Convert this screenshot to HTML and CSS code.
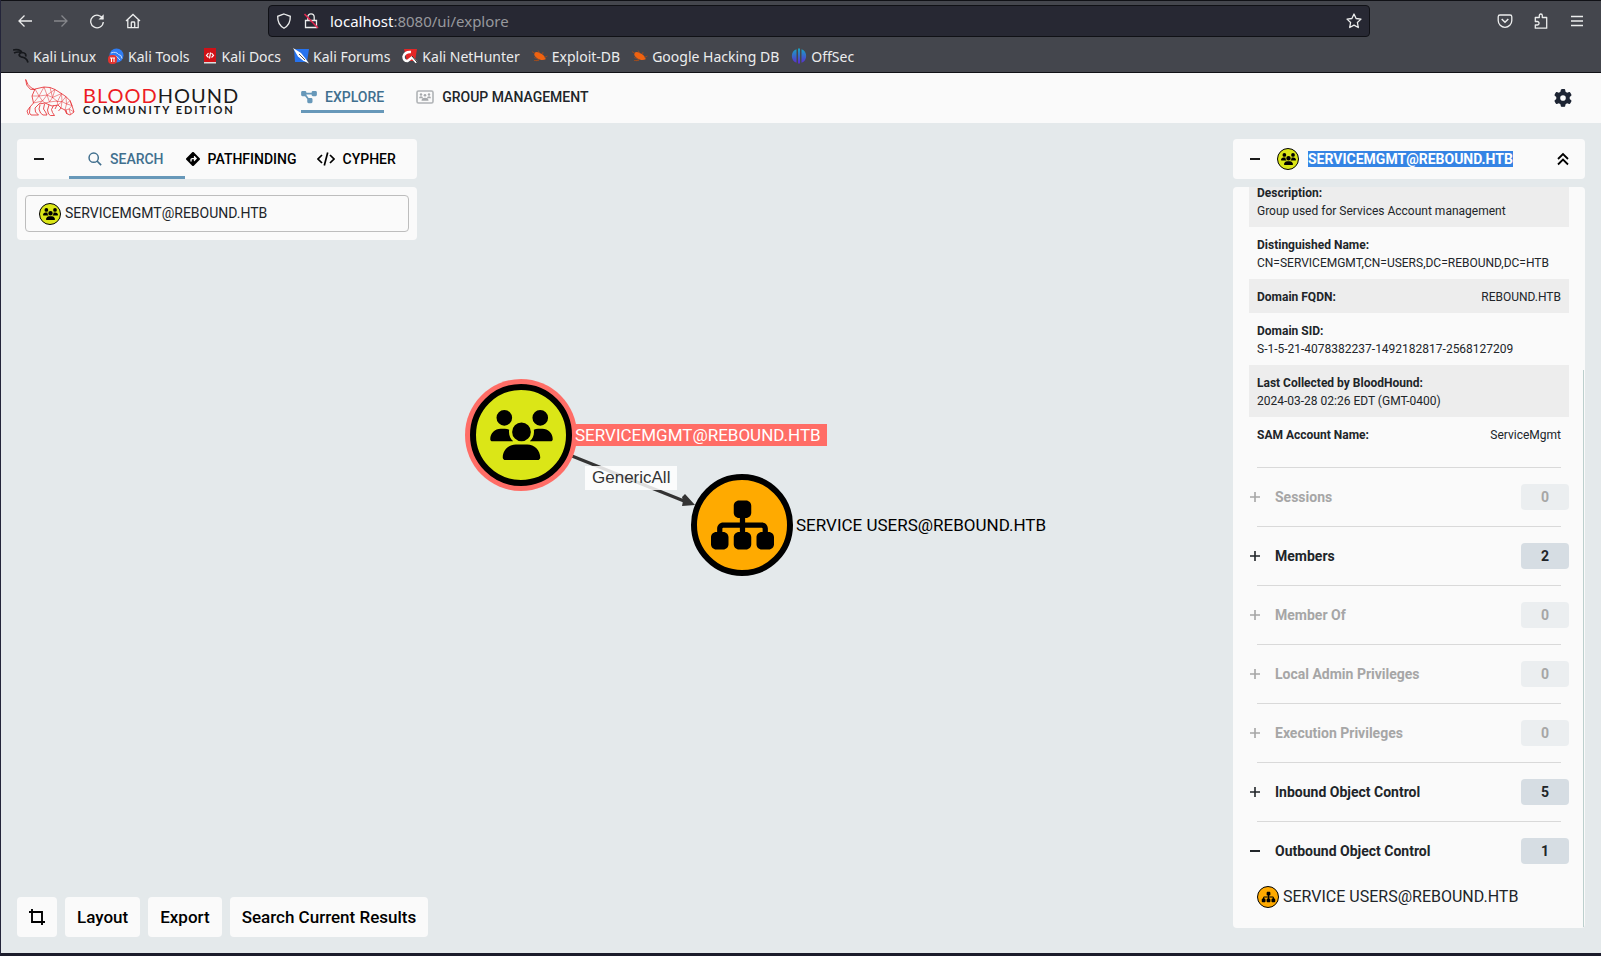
FILE: index.html
```html
<!DOCTYPE html>
<html lang="en">
<head>
<meta charset="utf-8">
<title>BloodHound</title>
<link rel="stylesheet" href="styles.css">
</head>
<body>
<svg class="defs" aria-hidden="true">
  <symbol id="users" viewBox="0 0 640 512"><path d="M144 0a80 80 0 1 1 0 160A80 80 0 1 1 144 0zM512 0a80 80 0 1 1 0 160A80 80 0 1 1 512 0zM0 298.7C0 239.8 47.8 192 106.7 192h42.7c15.9 0 31 3.5 44.6 9.7c-1.3 7.2-1.9 14.7-1.9 22.3c0 38.2 16.8 72.5 43.3 96c-.2 0-.4 0-.7 0H21.3C9.6 320 0 310.4 0 298.7zM405.3 320c-.2 0-.4 0-.7 0c26.6-23.5 43.3-57.8 43.3-96c0-7.6-.7-15-1.9-22.3c13.6-6.3 28.7-9.7 44.6-9.7h42.7C592.2 192 640 239.8 640 298.7c0 11.8-9.6 21.3-21.3 21.3H405.3zM224 224a96 96 0 1 1 192 0 96 96 0 1 1 -192 0zM128 485.3C128 411.7 187.7 352 261.3 352H378.7C452.3 352 512 411.7 512 485.3c0 14.7-11.9 26.7-26.7 26.7H154.7c-14.7 0-26.7-11.9-26.7-26.7z"/></symbol>
  <symbol id="sitemap" viewBox="0 0 576 512"><path d="M208 80c0-26.5 21.5-48 48-48h64c26.5 0 48 21.5 48 48v64c0 26.5-21.5 48-48 48h-8v40H464c30.9 0 56 25.1 56 56v32h8c26.5 0 48 21.5 48 48v64c0 26.5-21.5 48-48 48H464c-26.5 0-48-21.5-48-48V368c0-26.5 21.5-48 48-48h8V288c0-4.4-3.6-8-8-8H312v40h8c26.5 0 48 21.5 48 48v64c0 26.5-21.5 48-48 48H256c-26.5 0-48-21.5-48-48V368c0-26.5 21.5-48 48-48h8V280H112c-4.4 0-8 3.6-8 8v32h8c26.5 0 48 21.5 48 48v64c0 26.5-21.5 48-48 48H48c-26.5 0-48-21.5-48-48V368c0-26.5 21.5-48 48-48h8V288c0-30.9 25.1-56 56-56H264V192h-8c-26.5 0-48-21.5-48-48V80z"/></symbol>
  <symbol id="plus" viewBox="0 0 12 12"><path d="M1 6h10M6 1v10" fill="none" stroke="currentColor" stroke-width="1.6"/></symbol>
  <symbol id="minus" viewBox="0 0 12 12"><path d="M1 6h10" fill="none" stroke="currentColor" stroke-width="1.8"/></symbol>
  <symbol id="bug" viewBox="0 0 16 16"><path d="M2.500 5C4 3 7 4 9.500 5.800c2.500 1.600 4 3.700 4.200 5.400-2.500 1.200-6 .8-8.200-.8C3.300 9 1.500 7 2.500 5z" fill="#ef6210"/><path d="M0 3.500l3 2M2 9.500l3 1M6 2.500l2 3M11 4l-.5 3M15.500 8l-3 1.500M4 13l3-2M2 12.500h5" stroke="#a34b1c" stroke-width=".8" fill="none"/></symbol>
</svg>

<header class="browser">
  <div class="toolbar">
    <nav class="history" aria-label="Browser">
      <button class="tool" aria-label="Back"><svg viewBox="0 0 16 16"><path d="M15 8H2M7.500 2.500L2 8l5.500 5.500"/></svg></button>
      <button class="tool off" aria-label="Forward"><svg viewBox="0 0 16 16"><path d="M1 8h13M8.500 2.500L14 8l-5.500 5.500"/></svg></button>
      <button class="tool" aria-label="Reload"><svg viewBox="0 0 16 16"><path d="M13.800 6A6.300 6.300 0 1 0 14.300 9"/><path d="M14.700 1.200v5.300H9.500z" fill="currentColor" stroke="none"/></svg></button>
      <button class="tool" aria-label="Home"><svg viewBox="0 0 16 16"><path d="M1 8L8 1.500 15 8M2.800 6.500v8.200h10.400V6.500M6.300 14.700V9.800q0-.8.8-.8h1.800q.8 0 .8.8v4.900"/></svg></button>
    </nav>
    <div class="address">
      <svg class="tool-icon" viewBox="0 0 16 16"><path d="M8 1l6.300 2.300C14.500 9 12.500 12.800 8 15.200 3.500 12.800 1.500 9 1.700 3.300z"/></svg>
      <svg class="tool-icon" viewBox="0 0 16 16"><path d="M2.500 7.500h11v7h-11zM4.800 7.500V4a3.200 3.200 0 0 1 6.400 0v3.500"/><path d="M1.500 1l13.500 14" stroke="#e22850" stroke-width="1.600"/></svg>
      <div class="url" role="textbox" aria-label="Address" tabindex="0"><span class="host">localhost</span>:8080/ui/explore</div>
      <button class="tool" aria-label="Bookmark"><svg viewBox="0 0 16 16"><path d="M8 1l2.100 4.500 4.900.6-3.600 3.400.9 5L8 12.100 3.700 14.500l.9-5L1 6.100l4.900-.6z" stroke-linejoin="round"/></svg></button>
    </div>
    <div class="extras">
      <button class="tool" aria-label="Pocket"><svg viewBox="0 0 16 16"><path d="M3 2h10q1.800 0 1.800 1.800V7.500a6.800 6.800 0 0 1-13.600 0V3.800Q1.200 2 3 2z"/><path d="M4.700 6L8 9.200 11.300 6" stroke-width="1.500"/></svg></button>
      <button class="tool" aria-label="Extensions"><svg viewBox="0 0 16 16"><path d="M2.300 5.500V4.500h4V2.500a1.500 1.500 0 0 1 3 0v2h4.400v10.700H2.300v-3.200h2a1.700 1.700 0 0 0 0-3.500h-2z" stroke-linejoin="round"/></svg></button>
      <button class="tool" aria-label="Menu"><svg viewBox="0 0 16 16"><path d="M2 3.500h12M2 8h12M2 12.500h12"/></svg></button>
    </div>
  </div>
  <nav class="bookmarks" aria-label="Bookmarks">
    <a href="#"><svg viewBox="0 0 16 16"><path d="M0 2c4-1 8 0 9 2.500 3 0 4.500 2 3.500 4M1 5c3-1.500 6-1 8-.5C6 5 5 8 8 8.800c3 .6 6 1.200 7 5.700" fill="none" stroke="#16181c" stroke-width="1.700"/></svg>Kali Linux</a>
    <a href="#"><svg viewBox="0 0 16 16"><circle cx="8.500" cy="7.500" r="7" fill="#2f7df4"/><path d="M3 5q5-2 7.500 1.500 3 0 3.500 4M5 8q4-1 7 4" stroke="#c9defc" fill="none"/><rect y="7" width="9" height="9" rx="4" fill="#e3342f"/><path d="M2 10h5M3.500 10v4M6 10v4" stroke="#fff" fill="none"/></svg>Kali Tools</a>
    <a href="#"><svg viewBox="0 0 16 16"><path d="M2 0h12v15H2z" fill="#d01117"/><path d="M2 14h12v1.500H2z" fill="#ddd"/><path d="M6.500 5L4.500 7.500l2 2M9.500 5l2 2.500-2 2M8.500 4.500l-1 6" stroke="#fff" stroke-width="1.200" fill="none"/></svg>Kali Docs</a>
    <a href="#"><svg viewBox="0 0 16 16"><path d="M1 1h15l-2 13H2z" fill="#2673ef"/><path d="M0 0l8 5 4 5 4 5.500-6-3-5-4z" fill="#fff"/><path d="M6 6l6 6" stroke="#555" fill="none"/></svg>Kali Forums</a>
    <a href="#"><svg viewBox="0 0 16 16"><path d="M2 1h13l-2 12H5z" fill="#e32626"/><path d="M9 4Q3 3.500 1.500 8.500 1.500 13 5.500 13l4.500-3.500 4.500 5" stroke="#fff" stroke-width="2.500" fill="none"/><path d="M10 8l5 6" stroke="#222" fill="none"/></svg>Kali NetHunter</a>
    <a href="#"><svg viewBox="0 0 16 16"><use href="#bug"/></svg>Exploit-DB</a>
    <a href="#"><svg viewBox="0 0 16 16"><use href="#bug"/></svg>Google Hacking DB</a>
    <a href="#"><svg viewBox="0 0 16 16"><defs><linearGradient id="off" x2="0" y2="1"><stop stop-color="#16a6c4"/><stop offset="1" stop-color="#5b2ad0"/></linearGradient></defs><path d="M5.500 1.200v13.600A7.300 7.300 0 0 1 5.500 1.200zM7 .5h2v15H7zM10.500 1.200v13.600a7.300 7.300 0 0 0 0-13.600z" fill="url(#off)"/></svg>OffSec</a>
  </nav>
</header>

<div class="app">
  <header class="topbar">
    <a class="brand" href="#" aria-label="BloodHound Community Edition">
      <svg class="hound" viewBox="0 0 50 38">
        <path d="M.7.5l1 5.500 3.600 4.300 4.700.2L6.500 9 3 5.500zM10 10l9-2 6 .5 5 2 6.700 4.200 4.300 3 4 4 2 5 2 6.300-4 3-3.500-1.500L40 31l-4-2-3-3-6 1-7-3-6 1-4 4 .5 4 3 3H6l-1.500-2L5 28l3.500-4-1.500-7zM15 26l-1 4 1.500 4 2.500 2h4l-1.500-3-2-3 1-5M24 26l-1.500 5 1 4 2 1.500h4l-2-3-1-3 2-4M32 26l-2 4M36 29l-2.500 3M5 28l-3 4 1.500 4M41 31l1 4"/>
        <path class="mesh" d="M10 10l4 7 5-9 3 8 8-5.500-2.500 8L22 16l-8 1-5.500 7 9-2-3.500-5M17.500 22l4.500-6 2.500 7 3-4.500 9-4-4 8-5-4M24.500 23l7.500-1 1 4M17.500 22l2.500 2 4.500-1M14 25l3.500-3M36.500 14.500l.5 8-5 0M37 22.500l4-5 .5 7.500-4.500-2.500-4 3.500M41.500 25l3.500-3.500 2 5-5.500-1.500L40 31l4-1 1.500 5M44 30l3-3.500M44 30l5 3M25 8.500l2.500 10M7 17l7 0M36 29l1-6.500"/>
      </svg>
      <span class="wordmark"><span class="name"><span class="blood">BLOOD</span>HOUND</span><span class="edition">COMMUNITY EDITION</span></span>
    </a>
    <nav class="views" aria-label="Main">
      <a class="view current" href="#"><svg class="view-icon" viewBox="0 0 576 512"><path d="M0 80C0 53.5 21.500 32 48 32h96c26.500 0 48 21.500 48 48V96H384V80c0-26.500 21.500-48 48-48h96c26.500 0 48 21.500 48 48v96c0 26.500-21.500 48-48 48H432c-26.500 0-48-21.500-48-48V160H192v16c0 1.700-.1 3.400-.3 5L272 288h96c26.500 0 48 21.500 48 48v96c0 26.500-21.500 48-48 48H272c-26.500 0-48-21.500-48-48V336c0-1.700 .1-3.400 .3-5L144 224H48c-26.500 0-48-21.500-48-48V80z" fill="#6798b9"/></svg>EXPLORE</a>
      <a class="view" href="#"><svg class="view-icon wide" viewBox="0 0 18 14"><rect x="1" y="1" width="16" height="12" rx="1.500" fill="none" stroke="#b0b3b6" stroke-width="1.600"/><g fill="#a6a9ac"><circle cx="5" cy="4.500" r="1.200"/><circle cx="9" cy="5.200" r="1.300"/><circle cx="13" cy="4.500" r="1.200"/><path d="M3 8.300q0-2 2-2t2 2zM11 8.300q0-2 2-2t2 2zM5.500 10.800q0-3 3.500-3t3.500 3z"/></g></svg>GROUP MANAGEMENT</a>
    </nav>
    <button class="settings" aria-label="Settings"><svg viewBox="0 0 512 512"><path d="M495.900 166.600c3.200 8.700 .5 18.400-6.400 24.600l-43.300 39.400c1.100 8.300 1.700 16.800 1.700 25.400s-.6 17.100-1.700 25.400l43.300 39.400c6.900 6.200 9.600 15.900 6.400 24.600c-4.400 11.900-9.700 23.300-15.800 34.300l-4.700 8.100c-6.600 11-14 21.400-22.100 31.200c-5.900 7.200-15.700 9.600-24.500 6.800l-55.700-17.700c-13.400 10.300-28.200 18.900-44 25.400l-12.500 57.100c-2 9.100-9 16.300-18.200 17.800c-13.800 2.300-28 3.500-42.500 3.500s-28.700-1.200-42.500-3.500c-9.200-1.500-16.200-8.700-18.200-17.800l-12.500-57.100c-15.800-6.500-30.600-15.100-44-25.400L83.100 425.900c-8.800 2.800-18.600 .3-24.500-6.800c-8.100-9.800-15.500-20.200-22.100-31.200l-4.700-8.100c-6.100-11-11.400-22.400-15.800-34.300c-3.200-8.700-.5-18.400 6.400-24.600l43.300-39.400C64.600 273.100 64 264.600 64 256s.6-17.100 1.700-25.400L22.400 191.200c-6.900-6.200-9.600-15.900-6.400-24.600c4.400-11.900 9.700-23.300 15.800-34.300l4.700-8.100c6.600-11 14-21.400 22.100-31.200c5.900-7.200 15.700-9.600 24.500-6.800l55.700 17.700c13.400-10.300 28.200-18.900 44-25.400l12.500-57.100c2-9.100 9-16.300 18.200-17.800C227.300 1.200 241.500 0 256 0s28.700 1.200 42.500 3.500c9.200 1.500 16.200 8.700 18.200 17.800l12.500 57.100c15.800 6.500 30.600 15.100 44 25.400l55.700-17.700c8.800-2.800 18.600-.3 24.500 6.800c8.100 9.800 15.500 20.200 22.100 31.200l4.700 8.100c6.100 11 11.400 22.400 15.800 34.300zM256 336a80 80 0 1 0 0-160 80 80 0 1 0 0 160z"/></svg></button>
  </header>

  <main class="explore">
    <div class="graph">
      <svg class="edges" aria-hidden="true"><path d="M571 333L683 378" stroke="#333" stroke-width="3" fill="none"/><path d="M694 382L681 383l1-5-1-4 3-3z" fill="#333"/></svg>
      <div class="node group-node"><svg><use href="#users"/></svg></div>
      <div class="node ou-node"><svg><use href="#sitemap"/></svg></div>
      <span class="node-label group-label">SERVICEMGMT@REBOUND.HTB</span>
      <span class="node-label ou-label">SERVICE USERS@REBOUND.HTB</span>
      <span class="edge-label">GenericAll</span>
    </div>

    <div class="left">
      <section class="finder">
        <div class="card tabs">
          <button class="toggle" aria-label="Collapse search"><svg><use href="#minus"/></svg></button>
          <button class="tab active"><svg viewBox="0 0 16 16"><circle cx="6.500" cy="6.500" r="5.300" fill="none" stroke="currentColor" stroke-width="1.700"/><path d="M10.300 10.300L15 15" stroke="currentColor" stroke-width="1.900"/></svg>SEARCH</button>
          <button class="tab"><svg viewBox="0 0 512 512"><path d="M227.700 11.700c15.600-15.600 40.900-15.600 56.600 0l216 216c15.600 15.600 15.600 40.900 0 56.600l-216 216c-15.600 15.600-40.900 15.600-56.600 0l-216-216c-15.600-15.600-15.600-40.900 0-56.600l216-216zm87.600 137c-4.600-4.600-11.500-5.900-17.400-3.500s-9.900 8.300-9.900 14.800v56H224c-35.300 0-64 28.700-64 64v48c0 13.300 10.700 24 24 24s24-10.700 24-24V280c0-8.800 7.200-16 16-16h64v56c0 6.500 3.900 12.300 9.900 14.800s12.900 1.100 17.400-3.500l80-80c6.200-6.200 6.200-16.400 0-22.600l-80-80z"/></svg>PATHFINDING</button>
          <button class="tab"><svg class="code" viewBox="0 0 18 16"><path d="M5 4L1 8l4 4M13 4l4 4-4 4M10.700 1.500L7.300 14.500" fill="none" stroke="currentColor" stroke-width="1.700"/></svg>CYPHER</button>
        </div>
        <div class="card search">
          <label class="field"><span class="badge yellow"><svg><use href="#users"/></svg></span><input type="text" aria-label="Search nodes" value="SERVICEMGMT@REBOUND.HTB"></label>
        </div>
      </section>
      <div class="actions">
        <button class="action crop" aria-label="Reset view"><svg viewBox="0 0 16 16"><path d="M0 3h13v13M3 0v13h13" fill="none" stroke="currentColor" stroke-width="1.900"/></svg></button>
        <button class="action">Layout</button>
        <button class="action">Export</button>
        <button class="action">Search Current Results</button>
      </div>
    </div>

    <aside class="right">
      <div class="card entity">
        <button class="toggle" aria-label="Collapse details"><svg><use href="#minus"/></svg></button>
        <span class="badge yellow"><svg><use href="#users"/></svg></span>
        <h1 class="title"><span class="selected">SERVICEMGMT@REBOUND.HTB</span></h1>
        <button class="collapse" aria-label="Collapse all"><svg viewBox="0 0 12 14"><path d="M1 7l5-5 5 5M1 12.500l5-5 5 5" fill="none" stroke="currentColor" stroke-width="1.800"/></svg></button>
      </div>
      <div class="card details">
        <dl class="facts">
          <div class="fact"><dt>Description:</dt><dd>Group used for Services Account management</dd></div>
          <div class="fact"><dt>Distinguished Name:</dt><dd>CN=SERVICEMGMT,CN=USERS,DC=REBOUND,DC=HTB</dd></div>
          <div class="fact inline"><dt>Domain FQDN:</dt><dd>REBOUND.HTB</dd></div>
          <div class="fact"><dt>Domain SID:</dt><dd>S-1-5-21-4078382237-1492182817-2568127209</dd></div>
          <div class="fact"><dt>Last Collected by BloodHound:</dt><dd>2024-03-28 02:26 EDT (GMT-0400)</dd></div>
          <div class="fact inline"><dt>SAM Account Name:</dt><dd>ServiceMgmt</dd></div>
        </dl>
        <button class="group" disabled><svg><use href="#plus"/></svg><span class="group-name">Sessions</span><span class="count">0</span></button>
        <button class="group"><svg><use href="#plus"/></svg><span class="group-name">Members</span><span class="count">2</span></button>
        <button class="group" disabled><svg><use href="#plus"/></svg><span class="group-name">Member Of</span><span class="count">0</span></button>
        <button class="group" disabled><svg><use href="#plus"/></svg><span class="group-name">Local Admin Privileges</span><span class="count">0</span></button>
        <button class="group" disabled><svg><use href="#plus"/></svg><span class="group-name">Execution Privileges</span><span class="count">0</span></button>
        <button class="group"><svg><use href="#plus"/></svg><span class="group-name">Inbound Object Control</span><span class="count">5</span></button>
        <button class="group"><svg><use href="#minus"/></svg><span class="group-name">Outbound Object Control</span><span class="count">1</span></button>
        <a class="result" href="#"><span class="badge orange"><svg><use href="#sitemap"/></svg></span>SERVICE USERS@REBOUND.HTB</a>
        <span class="scroll-thumb"></span>
      </div>
    </aside>
  </main>
</div>
</body>
</html>
```
FILE: styles.css
```css
* { box-sizing: border-box; }
body {
  margin: 0;
  min-height: 100vh;
  display: flex;
  flex-direction: column;
  font-family: Roboto, "Liberation Sans", sans-serif;
  color: #212529;
  background: #e4e9eb;
  border-left: 1px solid #24253a;
  border-bottom: 3px solid #1b1c2b;
}
button {
  font: inherit;
  color: inherit;
  background: none;
  border: 0;
  padding: 0;
  display: flex;
  align-items: center;
}
a { color: inherit; text-decoration: none; }
svg { display: block; flex: none; }
.defs { position: absolute; width: 0; height: 0; }

/* Browser chrome */
.browser {
  height: 73px;
  background: #44464d;
  border-top: 1px solid #101116;
  border-bottom: 1px solid #101116;
  color: #eceded;
  font-family: "Noto Sans", sans-serif;
}
.toolbar {
  height: 40px;
  display: flex;
  align-items: center;
  padding: 0 16px;
}
.history { display: flex; gap: 20px; flex: 1 1 36px; }
.tool svg, .tool-icon {
  width: 16px;
  height: 16px;
  fill: none;
  stroke: currentColor;
  stroke-width: 1.3;
}
.off { color: #85868b; }
.address {
  flex: 0 1 1102px;
  height: 32px;
  display: flex;
  align-items: center;
  gap: 11px;
  padding: 0 7px;
  background: #272833;
  border: 1px solid #101116;
  border-radius: 4px;
}
.url { flex: 1; font-size: 15px; color: #97989d; }
.host { color: #fbfbfe; }
.extras { flex: 1 1 0; display: flex; justify-content: flex-end; gap: 20px; }
.bookmarks {
  height: 30px;
  display: flex;
  align-items: center;
  gap: 12px;
  padding: 0 12px;
  font-size: 14px;
}
.bookmarks a { display: flex; align-items: center; gap: 4px; white-space: nowrap; }
.bookmarks svg { width: 16px; height: 16px; }

/* App bar */
.app { flex: 1; display: flex; flex-direction: column; }
.topbar {
  height: 50px;
  display: flex;
  align-items: center;
  padding: 0 29px 0 24px;
  background: #fafafa;
}
.brand { display: flex; align-items: center; gap: 8px; width: 276px; }
.hound { width: 50px; height: 38px; fill: none; stroke: #e5252a; stroke-width: .8; }
.mesh { stroke-width: .5; }
.wordmark { display: flex; flex-direction: column; padding-top: 6px; font-family: Lato, sans-serif; color: #1a1a1a; }
.name { font-size: 20px; line-height: 16px; letter-spacing: 1px; }
.blood { color: #ed1c24; }
.edition { font-size: 11px; line-height: 13px; letter-spacing: 2px; font-weight: 700; }
.views { display: flex; gap: 32px; flex: 1; font-size: 14px; font-weight: 500; }
.view { display: flex; align-items: center; gap: 8px; height: 29px; border-bottom: 3px solid transparent; }
.view-icon { width: 16px; height: 14px; }
.wide { width: 18px; }
.current { color: #406f8e; border-color: #6798b9; }
.settings svg { width: 18px; height: 18px; fill: #1d2433; }

/* Explore page */
.explore { position: relative; flex: 1; display: flex; justify-content: space-between; padding: 16px; }
.left, .right { position: relative; display: flex; flex-direction: column; }
.left { justify-content: space-between; }
.finder { width: 400px; display: flex; flex-direction: column; gap: 8px; }
.card { background: #fafafa; border-radius: 4px; }
.toggle svg { width: 12px; height: 12px; color: #000; }
.tabs { height: 40px; display: flex; padding-left: 16px; }
.tabs .toggle { width: 36px; }
.tab {
  padding: 0 19px 0 1px;
  gap: 8px;
  color: #000;
  font-size: 14px;
  font-weight: 500;
  border-bottom: 3px solid transparent;
  border-top: 3px solid transparent;
}
.tab svg { width: 14px; height: 14px; }
.tab .code { width: 18px; height: 16px; }
.tab.active { padding: 0 21px 0 19px; color: #406f8e; border-bottom-color: #6798b9; }
.search { padding: 8px; }
.field {
  height: 37px;
  display: flex;
  align-items: center;
  gap: 4px;
  padding: 0 13px;
  border: 1px solid #bdbdbd;
  border-radius: 4px;
}
.field input {
  flex: 1;
  min-width: 0;
  padding: 0 0 2px;
  border: 0;
  outline: 0;
  background: none;
  color: inherit;
  font: 14px Roboto, sans-serif;
}
.badge {
  width: 22px;
  height: 22px;
  flex: none;
  display: flex;
  align-items: center;
  justify-content: center;
  border: 1px solid #000;
  border-radius: 50%;
}
.badge svg { width: 15px; height: 12px; }
.yellow { background: #dbe617; }
.orange { background: #ffaa00; }
.actions { display: flex; gap: 8px; }
.action {
  height: 40px;
  padding: 0 12px;
  background: #fafafa;
  border-radius: 4px;
  color: #000;
  font-size: 17px;
  font-weight: 500;
}
.crop svg { width: 16px; height: 16px; }

/* Graph canvas */
.graph { position: absolute; inset: 0; overflow: hidden; }
.edges { width: 100%; height: 100%; }
.node {
  position: absolute;
  width: 102px;
  height: 102px;
  display: flex;
  align-items: center;
  justify-content: center;
  border: 6px solid #000;
  border-radius: 50%;
}
.node svg { width: 63px; height: 50px; }
.group-node { left: 469px; top: 261px; background: #dbe617; box-shadow: 0 0 0 5px #ff6d66; }
.ou-node { left: 690px; top: 351px; background: #ffaa00; }
.ou-node svg { height: 56px; }
.node-label { position: absolute; font-size: 17px; line-height: 22px; color: #000; white-space: nowrap; }
.group-label { left: 572px; top: 301px; padding: 0 6px 0 2px; background: #ff6d66; color: #fff; }
.ou-label { left: 795px; top: 391px; }
.edge-label {
  position: absolute;
  left: 584px;
  top: 343px;
  padding: 0 7px;
  font-family: "Liberation Sans", sans-serif;
  font-size: 17px;
  line-height: 24px;
  color: #333;
  background: rgba(255, 255, 255, .84);
}

/* Entity panel */
.right { width: 352px; gap: 8px; padding-bottom: 9px; }
.entity { height: 40px; display: flex; align-items: center; padding: 0 16px; }
.entity .toggle { width: 28px; }
.title { flex: 1; margin: 0; padding-left: 9px; font-size: 14px; font-weight: 700; line-height: 17px; }
.selected { background: #3584e4; color: #fff; }
.collapse svg { width: 12px; height: 14px; color: #000; }
.details {
  position: relative;
  flex: 1 1 0;
  min-height: 0;
  overflow: hidden;
  display: flex;
  flex-direction: column;
  justify-content: flex-end;
  padding: 0 16px 20px;
}
.facts { margin: 0 0 16px; font-size: 12px; line-height: 18px; }
.fact { padding: 9px 8px 7px; }
.fact:nth-child(1), .fact:nth-child(3), .fact:nth-child(5) { background: #ededed; }
.inline { display: flex; justify-content: space-between; }
dt { font-weight: 700; }
dd { margin: 0; }
.group {
  width: 100%;
  padding: 17px 0 16px;
  font-size: 14px;
  font-weight: 700;
  text-align: left;
  background: linear-gradient(#d9d9d9, #d9d9d9) 8px 0 / calc(100% - 16px) 1px no-repeat;
}
.group svg { width: 12px; height: 12px; }
.group-name { flex: 1; padding-left: 14px; }
.count { width: 48px; border-radius: 4px; background: #d6dde3; line-height: 26px; text-align: center; }
.group:disabled { color: #a6a6a6; }
.group:disabled .count { background: #ebeef0; }
.result { display: flex; align-items: center; gap: 4px; padding: 6px 8px 0; font-size: 16px; line-height: 22px; }
.scroll-thumb { position: absolute; right: 1px; top: 183px; bottom: 1px; width: 1px; background: #bccfcd; }
```
